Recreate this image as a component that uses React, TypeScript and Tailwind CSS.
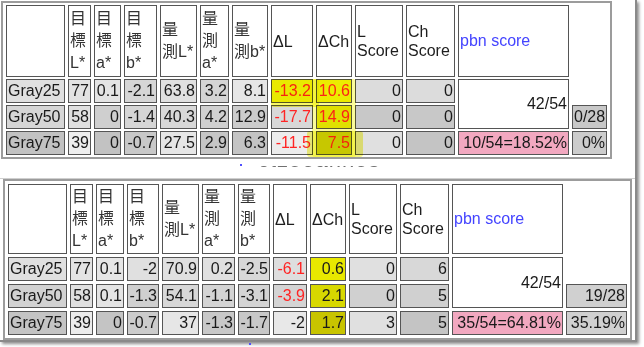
import React from 'react'

type Cell = { v: string; c: string; red?: boolean; rs?: number; left?: boolean }

const TOP_COLS = ['w-[59px]', 'w-[23px]', 'w-[27px]', 'w-[33px]', 'w-[37px]', 'w-[29px]', 'w-[36px]', 'w-[42px]', 'w-[36px]', 'w-[48px]', 'w-[49px]', 'w-[111px]', 'w-[35px]']
const BOT_COLS = ['w-[59px]', 'w-[23px]', 'w-[28px]', 'w-[32px]', 'w-[37px]', 'w-[33px]', 'w-[32px]', 'w-[34px]', 'w-[36px]', 'w-[48px]', 'w-[49px]', 'w-[111px]', 'w-[61px]']

const topRows: Cell[][] = [
  [
    { v: 'Gray25', c: 'bg-[#e0e0e0]', left: true },
    { v: '77', c: 'bg-[#e2e2e2]' },
    { v: '0.1', c: 'bg-[#e4e4e4]' },
    { v: '-2.1', c: 'bg-[#d6d6d6]' },
    { v: '63.8', c: 'bg-[#e0e0e0]' },
    { v: '3.2', c: 'bg-[#d4d4d4]' },
    { v: '8.1', c: 'bg-[#e6e6e6]' },
    { v: '-13.2', c: 'bg-[#f0f000]', red: true },
    { v: '10.6', c: 'bg-[#f0f000]', red: true },
    { v: '0', c: 'bg-[#dcdcdc]' },
    { v: '0', c: 'bg-[#dcdcdc]' },
    { v: '42/54', c: 'bg-white', rs: 2 },
  ],
  [
    { v: 'Gray50', c: 'bg-[#d6d6d6]', left: true },
    { v: '58', c: 'bg-[#e0e0e0]' },
    { v: '0', c: 'bg-[#cfcfcf]' },
    { v: '-1.4', c: 'bg-[#d6d6d6]' },
    { v: '40.3', c: 'bg-[#d8d8d8]' },
    { v: '4.2', c: 'bg-[#d0d0d0]' },
    { v: '12.9', c: 'bg-[#cccccc]' },
    { v: '-17.7', c: 'bg-[#d8d8d8]', red: true },
    { v: '14.9', c: 'bg-[#e4e400]', red: true },
    { v: '0', c: 'bg-[#c8c8c8]' },
    { v: '0', c: 'bg-[#c8c8c8]' },
    { v: '0/28', c: 'bg-[#c8c8c8]' },
  ],
  [
    { v: 'Gray75', c: 'bg-[#c2c2c2]', left: true },
    { v: '39', c: 'bg-[#eeeeee]' },
    { v: '0', c: 'bg-[#c2c2c2]' },
    { v: '-0.7', c: 'bg-[#c8c8c8]' },
    { v: '27.5', c: 'bg-[#e6e6e6]' },
    { v: '2.9', c: 'bg-[#c6c6c6]' },
    { v: '6.3', c: 'bg-[#c4c4c4]' },
    { v: '-11.5', c: 'bg-[#ececec]', red: true },
    { v: '7.5', c: 'bg-[#d2d200]', red: true },
    { v: '0', c: 'bg-[#e0e0e0]' },
    { v: '0', c: 'bg-[#c4c4c4]' },
    { v: '10/54=18.52%', c: 'bg-[#f2a8c0]' },
    { v: '0%', c: 'bg-[#cccccc]' },
  ],
]

const botRows: Cell[][] = [
  [
    { v: 'Gray25', c: 'bg-[#e0e0e0]', left: true },
    { v: '77', c: 'bg-[#e4e4e4]' },
    { v: '0.1', c: 'bg-[#e6e6e6]' },
    { v: '-2', c: 'bg-[#e0e0e0]' },
    { v: '70.9', c: 'bg-[#e0e0e0]' },
    { v: '0.2', c: 'bg-[#e0e0e0]' },
    { v: '-2.5', c: 'bg-[#d8d8d8]' },
    { v: '-6.1', c: 'bg-[#dedede]', red: true },
    { v: '0.6', c: 'bg-[#e8e800]' },
    { v: '0', c: 'bg-[#e0e0e0]' },
    { v: '6', c: 'bg-[#d8d8d8]' },
    { v: '42/54', c: 'bg-white', rs: 2 },
  ],
  [
    { v: 'Gray50', c: 'bg-[#d2d2d2]', left: true },
    { v: '58', c: 'bg-[#e0e0e0]' },
    { v: '0.1', c: 'bg-[#e4e4e4]' },
    { v: '-1.3', c: 'bg-[#d0d0d0]' },
    { v: '54.1', c: 'bg-[#d8d8d8]' },
    { v: '-1.1', c: 'bg-[#d4d4d4]' },
    { v: '-3.1', c: 'bg-[#d4d4d4]' },
    { v: '-3.9', c: 'bg-[#d4d4d4]', red: true },
    { v: '2.1', c: 'bg-[#d8d800]' },
    { v: '0', c: 'bg-[#d0d0d0]' },
    { v: '5', c: 'bg-[#d0d0d0]' },
    { v: '19/28', c: 'bg-[#d0d0d0]' },
  ],
  [
    { v: 'Gray75', c: 'bg-[#c4c4c4]', left: true },
    { v: '39', c: 'bg-[#ececec]' },
    { v: '0', c: 'bg-[#c4c4c4]' },
    { v: '-0.7', c: 'bg-[#cccccc]' },
    { v: '37', c: 'bg-[#e6e6e6]' },
    { v: '-1.3', c: 'bg-[#c8c8c8]' },
    { v: '-1.7', c: 'bg-[#c8c8c8]' },
    { v: '-2', c: 'bg-[#e8e8e8]' },
    { v: '1.7', c: 'bg-[#c8c400]' },
    { v: '3', c: 'bg-[#e0e0e0]' },
    { v: '5', c: 'bg-[#c4c4c4]' },
    { v: '35/54=64.81%', c: 'bg-[#f2a8c0]' },
    { v: '35.19%', c: 'bg-[#d0d0d0]' },
  ],
]

const cellBase = 'border border-[#555] px-[1px] py-0 whitespace-nowrap overflow-hidden'
const cjk = 'text-left leading-[22px] text-[#333]'
const lat = 'text-left leading-[19px] text-[#1e1e1e]'

const HeadRow = ({ h, b3 }: { h: string; b3: boolean }) => (
  <tr className={h}>
    <td className={`${cellBase} bg-white`}></td>
    <td className={`${cellBase} ${cjk}`}>目<br />標<br />L*</td>
    <td className={`${cellBase} ${cjk}`}>目<br />標<br />a*</td>
    <td className={`${cellBase} ${cjk}`}>目<br />標<br />b*</td>
    <td className={`${cellBase} ${cjk}`}>量<br />測L*</td>
    <td className={`${cellBase} ${cjk}`}>量<br />測<br />a*</td>
    {b3 ? (
      <td className={`${cellBase} ${cjk}`}>量<br />測<br />b*</td>
    ) : (
      <td className={`${cellBase} ${cjk}`}>量<br />測b*</td>
    )}
    <td className={`${cellBase} ${lat}`}>ΔL</td>
    <td className={`${cellBase} ${lat}`}>ΔCh</td>
    <td className={`${cellBase} ${lat}`}>L<br />Score</td>
    <td className={`${cellBase} ${lat}`}>Ch<br />Score</td>
    <td className={`${cellBase} text-left text-[#4444ff]`}>pbn score</td>
  </tr>
)

const DataTable = ({ cols, rows, head, b3, tableCls, rowH }: {
  cols: string[]; rows: Cell[][]; head: string; b3: boolean; tableCls: string; rowH: string
}) => (
  <table className={`table-fixed border-separate border-2 border-[#9c9c9c] bg-white text-[16px] leading-[20px] ${tableCls}`}>
    <colgroup>
      {cols.map((c, i) => <col key={i} className={c} />)}
    </colgroup>
    <tbody>
      <HeadRow h={head} b3={b3} />
      {rows.map((r, i) => (
        <tr key={i} className={rowH}>
          {r.map((cell, j) => (
            <td
              key={j}
              rowSpan={cell.rs}
              className={`${cellBase} ${cell.c} ${cell.left ? 'text-left' : 'text-right'} ${cell.red ? 'text-[#ff2424]' : 'text-[#1a1a1a]'}`}
            >
              {cell.v}
            </td>
          ))}
        </tr>
      ))}
    </tbody>
  </table>
)

export default function App() {
  return (
    <div className="w-[644px] h-[347px] bg-white overflow-hidden font-['Liberation_Sans','Noto_Sans_CJK_TC',sans-serif]">
      <div className="w-[637px] h-[342px] border-r-2 border-b-2 border-[#8a8a8a] shadow-[2px_2px_3px_rgba(0,0,0,0.45)] flex flex-col">
        <div className="h-[178px] shrink-0 pl-[1px] pt-[1px] flex flex-col">
          <div className="relative">
            <DataTable cols={TOP_COLS} rows={topRows} head="h-[72px]" b3={false} tableCls="w-[611px] [border-spacing:3px_2px]" rowH="h-[24px]" />
            {/* marker highlight strokes drawn over the table */}
            <div className="absolute left-[270px] top-[78px] w-[48px] h-[28px] rounded-[3px] bg-[#f4f400] mix-blend-multiply opacity-60 pointer-events-none" />
            <div className="absolute left-[311px] top-[78px] w-[44px] h-[78px] rounded-[3px] bg-[#f4f400] mix-blend-multiply opacity-40 pointer-events-none" />
            <div className="absolute left-[306px] top-[130px] w-[56px] h-[26px] rounded-[3px] bg-[#f0f000] mix-blend-multiply opacity-50 pointer-events-none" />
          </div>
          <div className="h-[5px] shrink-0" />
          <div className="pl-[239px] flex shrink-0">
            <div className="w-[2px] h-[2px] bg-[#5050ff]" />
          </div>
          <div className="flex-1" />
          <div className="pl-[257px] h-[6px] mb-[6px] overflow-hidden shrink-0">
            <div className="mt-[-18px] text-[22px] leading-[24px] text-[#707070] tracking-[1px]">ctz5oannos</div>
          </div>
        </div>
        <div className="flex-1 border-t border-[#cfcfcf] pl-[3px] flex flex-col">
          <DataTable cols={BOT_COLS} rows={botRows} head="h-[70px]" b3={true} tableCls="w-[629px] [border-spacing:3px]" rowH="h-[24px]" />
          <div className="pl-[246px] pt-[3px] flex">
            <div className="w-[2px] h-[2px] bg-[#5050ff]" />
          </div>
        </div>
      </div>
    </div>
  )
}
